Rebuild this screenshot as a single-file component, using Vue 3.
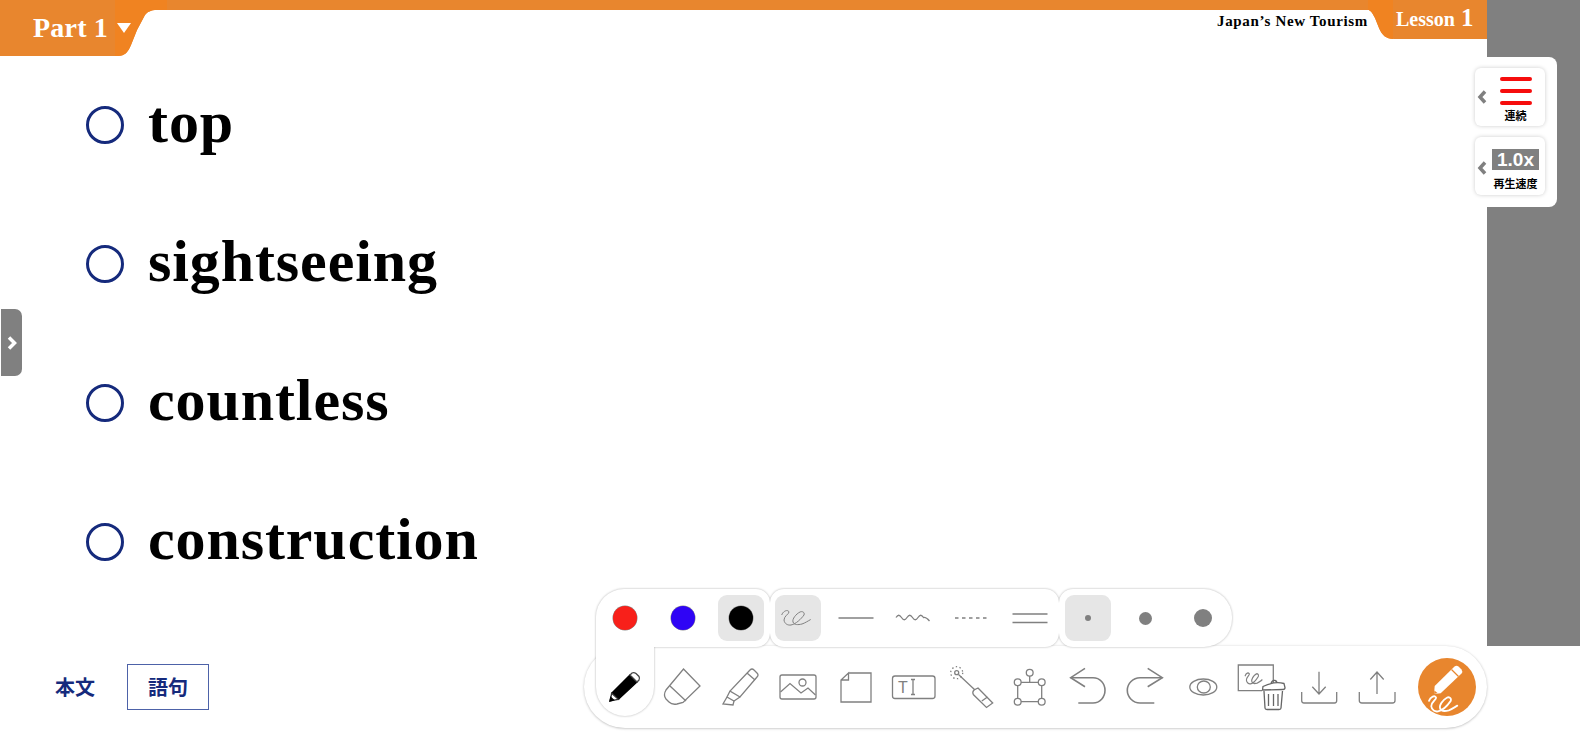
<script setup>
const words = ['top', 'sightseeing', 'countless', 'construction']
const colors = [
  { c: '#f8201a', on: false },
  { c: '#2f04f5', on: false },
  { c: '#000000', on: true },
]
const sizes = [
  { r: 3, on: true },
  { r: 6.5, on: false },
  { r: 9, on: false },
]
</script>

<template>
  <div class="page">
    <div class="stage">
      <main class="lesson">
        <header class="head">
          <div class="part">
            <svg class="tab-bg" width="167" height="56" viewBox="0 0 167 56">
              <path d="M0 0H167V10H157C151 10 147 12 145 15L137 30L131 45C128 52 125 56 118 56H0Z" fill="#e8862e" />
              <path d="M115 0H167V10H157C151 10 147 12 145 15L137 30L131 45C128 52 125 56 118 56H115Z" fill="#f08321" />
            </svg>
            <span class="part-name">Part 1</span>
            <i class="tri"></i>
          </div>
          <div class="title">Japan’s New Tourism</div>
          <div class="les">
            <svg class="tab-bg" width="119" height="39" viewBox="0 0 119 39">
              <path d="M0 0H119V39H26C18 39 14 35 11 28L7 18C4 12 2 10 0 10Z" fill="#e8862e" />
              <path d="M0 0H25V39C18 39 14 35 11 28L7 18C4 12 2 10 0 10Z" fill="#f08321" />
            </svg>
            <span class="les-name">Lesson <b>1</b></span>
          </div>
        </header>
        <ul class="words">
          <li v-for="w in words" :key="w" class="word">
            <i class="ring"></i><span class="word-text">{{ w }}</span>
          </li>
        </ul>
      </main>
      <aside class="side"></aside>
    </div>

    <footer class="foot">
      <span class="tab">本文</span>
      <span class="tab tab-on">語句</span>
    </footer>

    <button class="handle">
      <svg width="12" height="16" viewBox="0 0 12 16"><polyline points="3,2.5 8.5,8 3,13.5" /></svg>
    </button>

    <div class="opts">
      <div class="opt">
        <svg class="chev" width="12" height="14" viewBox="0 0 12 14"><polyline points="9,1.500 4,7 9,12.500" /></svg>
        <div class="opt-main">
          <div class="bars"><i></i><i></i><i></i></div>
          <div class="opt-label">連続</div>
        </div>
      </div>
      <div class="opt opt-speed">
        <svg class="chev" width="12" height="14" viewBox="0 0 12 14"><polyline points="9,1.500 4,7 9,12.500" /></svg>
        <div class="opt-main">
          <div class="speed">1.0x</div>
          <div class="opt-label">再生速度</div>
        </div>
      </div>
    </div>

    <div class="tools">
      <div class="panel">
        <div class="seg seg-a">
          <div v-for="k in colors" :key="k.c" class="cell">
            <div class="chip" :class="{ on: k.on }">
              <i class="dot" :style="{ background: k.c }"></i>
            </div>
          </div>
          <div class="pen-tab">
            <svg class="ic" width="58" height="58" viewBox="0 0 58 58">
              <path d="M15.700 34.300L34 16L41 23L22.300 40.300Z" fill="#000" stroke="#000" />
              <path d="M14 42L15.700 34.300L22.300 40.300Z" fill="#fff" stroke="#333" />
              <path d="M14 42L14.800 38.500L17.500 41Z" fill="#000" stroke="#000" />
              <path d="M34 16L36 14Q38 13 40 14.500L43 17.500Q44 19.500 43 21L41 23Z" fill="#fff" stroke="#444" />
            </svg>
          </div>
        </div>
        <div class="seg seg-b">
          <div class="cell">
            <div class="chip on">
              <svg class="ic ic-f" width="46" height="46" viewBox="6 6 46 46">
                <path d="M12.700 26C14 22 19 20 20 23C20 25 15 27 15 31C15.500 35 19 36.500 22 36C27 35 32 30 35 26C36 23 33 22 31 23C27 25 23 30 24 33C25 36 29 36 33 35C36 34 39 32 41.700 30.500" />
              </svg>
            </div>
          </div>
          <div class="cell">
            <svg class="ic" width="58" height="58" viewBox="0 0 58 58"><path d="M11.500 29H46.500" /></svg>
          </div>
          <div class="cell">
            <svg class="ic" width="58" height="58" viewBox="0 0 58 58"><path d="M11 28.500C13 25.500 14.500 25.500 16.500 28.500S20 31.500 22 28.500S25.500 25.500 27.500 28.500S31 31.500 33 28.500S36.500 25.500 38.500 28.500Q41 28 44.500 32" /></svg>
          </div>
          <div class="cell">
            <svg class="ic" width="58" height="58" viewBox="0 0 58 58"><path d="M12 29H47" stroke-dasharray="3.500 3.500" /></svg>
          </div>
          <div class="cell">
            <svg class="ic" width="58" height="58" viewBox="0 0 58 58"><path d="M11.500 25H46.500M11.500 33.500H46.500" /></svg>
          </div>
        </div>
        <div class="seg seg-c">
          <div v-for="s in sizes" :key="s.r" class="cell">
            <div class="chip" :class="{ on: s.on }">
              <i class="size" :style="{ width: s.r * 2 + 'px', height: s.r * 2 + 'px' }"></i>
            </div>
          </div>
        </div>
      </div>

      <div class="bar">
        <svg class="ic" width="58" height="58" viewBox="0 0 58 58">
          <path d="M29.5 10L46 27L29 43.5L23 45Q18 46 15 43L12 40Q9 36 12 31Z" />
          <path d="M16 27L32 42" />
        </svg>
        <svg class="ic" width="58" height="58" viewBox="0 0 58 58">
          <path d="M38 11Q40 9 42 11L45 14Q47 16 45 18L28 38L18 32Z" />
          <path d="M35 14L43 21" />
          <path d="M18 32L15 38L22 42L28 38" />
          <path d="M15 38L11 45L21 46L22 42" />
        </svg>
        <svg class="ic" width="58" height="58" viewBox="0 0 58 58">
          <rect x="10" y="16" width="36" height="24" rx="2" />
          <circle cx="32.5" cy="23.5" r="3.5" />
          <path d="M10.5 33L20 24.5L31 34L38 29L45.5 36" />
        </svg>
        <svg class="ic" width="58" height="58" viewBox="0 0 58 58">
          <path d="M20.5 14H43V43H13V21L20.5 14V21H13" />
        </svg>
        <svg class="ic" width="58" height="58" viewBox="0 0 58 58">
          <rect x="6.5" y="17" width="42.5" height="22.5" rx="2.5" />
          <text x="12" y="34" class="ic-t">T</text>
          <path d="M25 20.5H29M25 35.5H29M27 20.5V35.5" />
        </svg>
        <svg class="ic" width="58" height="58" viewBox="0 0 58 58">
          <circle cx="12.7" cy="13.7" r="2" />
          <circle cx="12.7" cy="13.7" r="6" stroke-dasharray="1.4 2.4" />
          <path d="M14.5 15.5L31 31" />
          <path d="M34 29L48.7 44L42.5 48.5L29.3 35.5Q28 33 30 31Z" />
          <path d="M43.5 38L37.8 42" />
        </svg>
        <svg class="ic" width="58" height="58" viewBox="0 0 58 58">
          <path d="M19 23.3H36.5M15.7 26.6V39.4M39.7 26.6V39.4M19 42.7H36.5M27.7 17V23.3" />
          <circle cx="15.7" cy="23.3" r="3.4" />
          <circle cx="39.7" cy="23.3" r="3.4" />
          <circle cx="15.7" cy="42.7" r="3.4" />
          <circle cx="39.7" cy="42.7" r="3.4" />
          <circle cx="27.7" cy="13.7" r="3.4" />
        </svg>
        <svg class="ic ic-b" width="58" height="58" viewBox="0 0 58 58">
          <path d="M25 9.3L10.7 18.7L25 27.7" />
          <path d="M10.7 18.7H33C40 18.7 45 24.5 45 31.3S40 44 33 44H18.3" />
        </svg>
        <svg class="ic ic-b" width="58" height="58" viewBox="0 0 58 58">
          <path d="M29.7 9.3L44.3 18.7L29.7 27.7" />
          <path d="M44.3 18.7H22C15 18.7 9.3 24.5 9.3 31.3S15 44 22 44H36.3" />
        </svg>
        <svg class="ic" width="58" height="58" viewBox="0 0 58 58">
          <ellipse cx="27.300" cy="28" rx="13.500" ry="8" />
          <ellipse cx="27.800" cy="28" rx="6.500" ry="6" />
        </svg>
        <svg class="ic" width="58" height="58" viewBox="0 0 58 58">
          <path d="M28 31.700H4.300V6H39.300V24" />
          <path class="thin" transform="translate(3.400 -2.200) scale(.6 .75)" d="M12.700 26C14 22 19 20 20 23C20 25 15 27 15 31C15.500 35 19 36.500 22 36C27 35 32 30 35 26C36 23 33 22 31 23C27 25 23 30 24 33C25 36 29 36 33 35C36 34 39 32 41.700 30.500" />
          <path d="M28.500 31L29 27.500Q40 22 50 24.500L51 28.500Q51 30.500 49 30.500Z" fill="#fff" stroke="#666" />
          <path d="M37 24.500Q38 21 41 21.500Q43 22 43 24" stroke="#666" />
          <path d="M30 32L31 49Q31 50.500 33 50.500H45Q47 50.500 47 49L48.500 32" stroke="#666" />
          <path d="M34.500 35V47M39.500 35V47M44 35V47" stroke="#666" />
        </svg>
        <svg class="ic" width="58" height="58" viewBox="0 0 58 58">
          <path d="M9.700 33V41.500Q9.700 44 12 44H42.500Q44.700 44 44.700 41.500V33" />
          <path d="M27 12.700V35M20.300 27.700L27 35L33.700 27.700" />
        </svg>
        <svg class="ic" width="58" height="58" viewBox="0 0 58 58">
          <path d="M9.300 33V41.500Q9.300 44 12 44H42.500Q45 44 45 41.500V33" />
          <path d="M27 35V13M20.300 20.500L27 13L33.700 20.500" />
        </svg>
        <div class="fab">
          <svg width="58" height="58" viewBox="0 0 58 58">
            <path d="M16 36L16.700 28L36.500 8.500Q38.500 7 40.500 8.500L43.500 11.500Q45 13.500 43.500 15.500L22.700 35.300Z" fill="#fff" />
            <path d="M33.500 11.500L40.500 18.500" stroke="#e8862e" stroke-width="1.300" />
            <path d="M16 36L16.400 32.500L19.500 35Z" fill="#e8862e" />
            <path class="fab-s" transform="translate(-1.400 15.600) scale(.976 1.050)" d="M12.700 26C14 22 19 20 20 23C20 25 15 27 15 31C15.500 35 19 36.500 22 36C27 35 32 30 35 26C36 23 33 22 31 23C27 25 23 30 24 33C25 36 29 36 33 35C36 34 39 32 41.700 30.500" />
          </svg>
        </div>
      </div>
    </div>
  </div>
</template>

<style>
html, body { margin: 0; background: #fff; overflow: hidden; }
</style>

<style scoped>
.page { position: relative; width: 1580px; height: 752px; overflow: hidden; background: #fff; color: #000; font-family: "Liberation Serif", "Noto Sans CJK JP", serif; }
.stage { display: flex; height: 646px; }
.lesson { width: 1487px; }
.side { flex: 1; background: #808080; }

.head { position: relative; display: flex; justify-content: space-between; align-items: flex-start; height: 56px; background: linear-gradient(#e8862e, #e8862e) top left / 100% 10px no-repeat; }
.tab-bg { position: absolute; left: 0; top: 0; }
.part { position: relative; width: 167px; height: 56px; display: flex; align-items: center; padding-left: 33px; box-sizing: border-box; color: #fff; }
.part-name { position: relative; font-size: 28px; font-weight: 700; letter-spacing: .2px; }
.tri { position: relative; margin-left: 9px; width: 0; height: 0; border-left: 7.500px solid transparent; border-right: 7.500px solid transparent; border-top: 10px solid #fff; margin-top: -1px; }
.title { margin-left: auto; padding-top: 13px; font-size: 15px; font-weight: 700; letter-spacing: .65px; line-height: 17px; }
.les { position: relative; width: 119px; height: 39px; color: #fff; flex: none; }
.les-name { position: absolute; left: 28px; top: 4px; font-size: 20px; font-weight: 700; line-height: 28px; white-space: nowrap; }
.les-name b { font-size: 25px; margin-left: 1px; }

.words { list-style: none; margin: 0; padding: 0 0 0 86px; }
.word { display: flex; align-items: center; height: 139px; font-weight: 700; font-size: 60px; line-height: 139px; letter-spacing: .9px; position: relative; top: -1px; }
.word-text { position: relative; top: -2px; }
.ring { box-sizing: border-box; width: 38px; height: 38px; border: 3px solid #152a7c; border-radius: 50%; margin-right: 24px; flex: none; }

.foot { display: flex; align-items: center; height: 46px; padding: 18px 0 0 55px; font-family: "Noto Sans CJK JP", sans-serif; font-weight: 700; font-size: 20px; color: #152a7c; }
.tab { line-height: 28px; }
.tab-on { box-sizing: border-box; width: 82px; height: 46px; margin-left: 32px; border: 1px solid #4d62a8; display: flex; align-items: center; justify-content: center; }

.handle { position: absolute; left: 1px; top: 309px; width: 21px; height: 67px; padding: 0; border: 0; background: #808080; border-radius: 0 7px 7px 0; display: flex; align-items: center; justify-content: center; }
.handle polyline { fill: none; stroke: #fff; stroke-width: 3.500; }

.opts { position: absolute; left: 1475px; top: 57px; width: 82px; height: 150px; box-sizing: border-box; padding-top: 11px; background: #fff; border-radius: 0 8px 8px 0; }
.opt { position: relative; width: 70px; height: 58px; background: #fff; border-radius: 6px; box-shadow: 0 0 4px rgba(0, 0, 0, .2); margin-bottom: 11px; }
.chev { position: absolute; left: 1px; top: 22px; }
.opt-speed .chev { top: 24px; }
.chev polyline { fill: none; stroke: #808080; stroke-width: 3.500; }
.opt-main { position: absolute; left: 17px; top: 0; width: 47px; }
.bars { display: flex; flex-direction: column; align-items: center; gap: 8px; padding-top: 9px; }
.bars i { display: block; width: 32px; height: 4px; background: #f60d0d; border-radius: 2px; }
.opt-label { font-family: "Noto Sans CJK JP", sans-serif; font-size: 11px; font-weight: 700; line-height: 14px; text-align: center; margin-top: 3px; white-space: nowrap; }
.speed { margin-top: 12px; height: 21px; background: #808080; color: #fff; font-family: "Liberation Sans", sans-serif; font-weight: 700; font-size: 19px; line-height: 21px; text-align: center; }
.opt-speed .opt-label { margin-top: 6px; }

.tools { position: absolute; left: 584px; top: 589px; width: 903px; }
.panel { position: relative; z-index: 1; display: flex; margin-left: 12px; height: 58px; filter: drop-shadow(0 .5px 1px rgba(0, 0, 0, .3)); }
.seg { position: relative; display: flex; background: #fff; border-radius: 14px; }
.seg-a { width: 173.550px; border-radius: 28px 14px 14px 0; }
.seg-b { width: 289.250px; }
.seg-c { width: 173.550px; border-radius: 14px 28px 28px 14px; }
.cell { flex: none; width: 57.850px; height: 58px; display: flex; align-items: center; justify-content: center; }
.chip { width: 46px; height: 46px; border-radius: 9px; display: flex; align-items: center; justify-content: center; }
.chip.on { background: #e6e6e6; }
.dot { display: block; box-sizing: border-box; width: 24px; height: 24px; border-radius: 50%; box-shadow: 0 0 0 .5px #8a8a8a; }
.size { display: block; border-radius: 50%; background: #808080; }
.pen-tab { position: absolute; left: 0; top: 58px; width: 58px; height: 69px; padding-top: 12px; box-sizing: border-box; background: #fff; border-radius: 0 0 29px 29px; }
.pen-tab svg { display: block; }

.bar { box-sizing: border-box; display: flex; align-items: flex-start; height: 82px; margin-top: -1px; padding: 13px 0 0 70px; background: #fff; border-radius: 41px; box-shadow: 0 .5px 2.500px rgba(0, 0, 0, .28); }
.ic { flex: none; display: block; fill: none; stroke: #808080; stroke-width: 1.300; }
.ic-f { stroke-width: 1; }
.ic-b { stroke-width: 1.600; }
.thin { stroke-width: 1.800; }
.ic-t { font-family: "Liberation Sans", sans-serif; font-size: 16px; fill: #808080; stroke: none; }
.fab { flex: none; width: 58px; height: 58px; margin: -1px 0 0 10px; background: #e8862e; border-radius: 50%; }
.fab svg { display: block; }
.fab-s { fill: none; stroke: #fff; stroke-width: 1.800; stroke-linecap: round; }
</style>
